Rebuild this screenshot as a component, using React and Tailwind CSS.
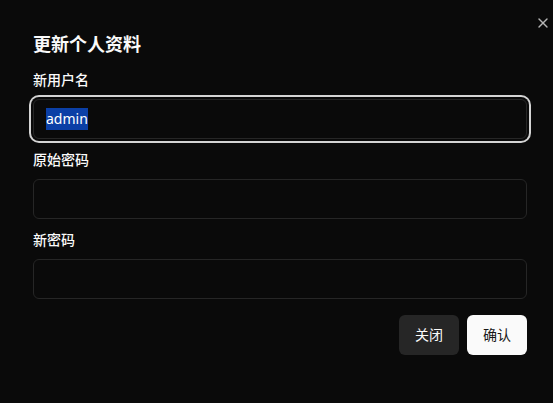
import React from "react";
import { X } from "lucide-react";

const font = { fontFamily: '"Noto Sans", "Noto Sans CJK SC", sans-serif' };

const Field = ({ label, children, focused }) => (
  <div className="flex flex-col">
    <label className="text-sm leading-5 text-[#fafafa] font-medium">{label}</label>
    <div
      className={
        "mt-[9px] h-10 w-full rounded-md border border-[#262626] bg-[#0a0a0a] px-3 flex items-center text-sm text-[#fafafa] " +
        (focused ? "ring-2 ring-[#d4d4d4] ring-offset-2 ring-offset-[#0a0a0a]" : "")
      }
    >
      {children}
    </div>
  </div>
);

export default function App() {
  return (
    <div
      className="relative w-[553px] h-[403px] bg-[#0a0a0a] text-[#fafafa] pl-[33px] pr-[26px] pt-[30px]"
      style={font}
    >
      <button className="absolute right-[2px] top-[15px] w-4 h-4 flex items-center justify-center text-[#b5b5b5]">
        <X size={16} strokeWidth={2} />
      </button>

      <h2 className="text-lg leading-7 font-semibold">更新个人资料</h2>

      <div className="mt-[12px] flex flex-col gap-[11px]">
        <Field label="新用户名" focused>
          <span className="bg-[#0b3fa6] text-white leading-[22px]">admin</span>
        </Field>
        <Field label="原始密码" />
        <Field label="新密码" />
      </div>

      <div className="mt-4 flex justify-end gap-2">
        <button className="h-10 w-[60px] rounded-md bg-[#262626] text-sm text-[#fafafa]">关闭</button>
        <button className="h-10 w-[60px] rounded-md bg-[#fafafa] text-sm text-[#171717]">确认</button>
      </div>
    </div>
  );
}
